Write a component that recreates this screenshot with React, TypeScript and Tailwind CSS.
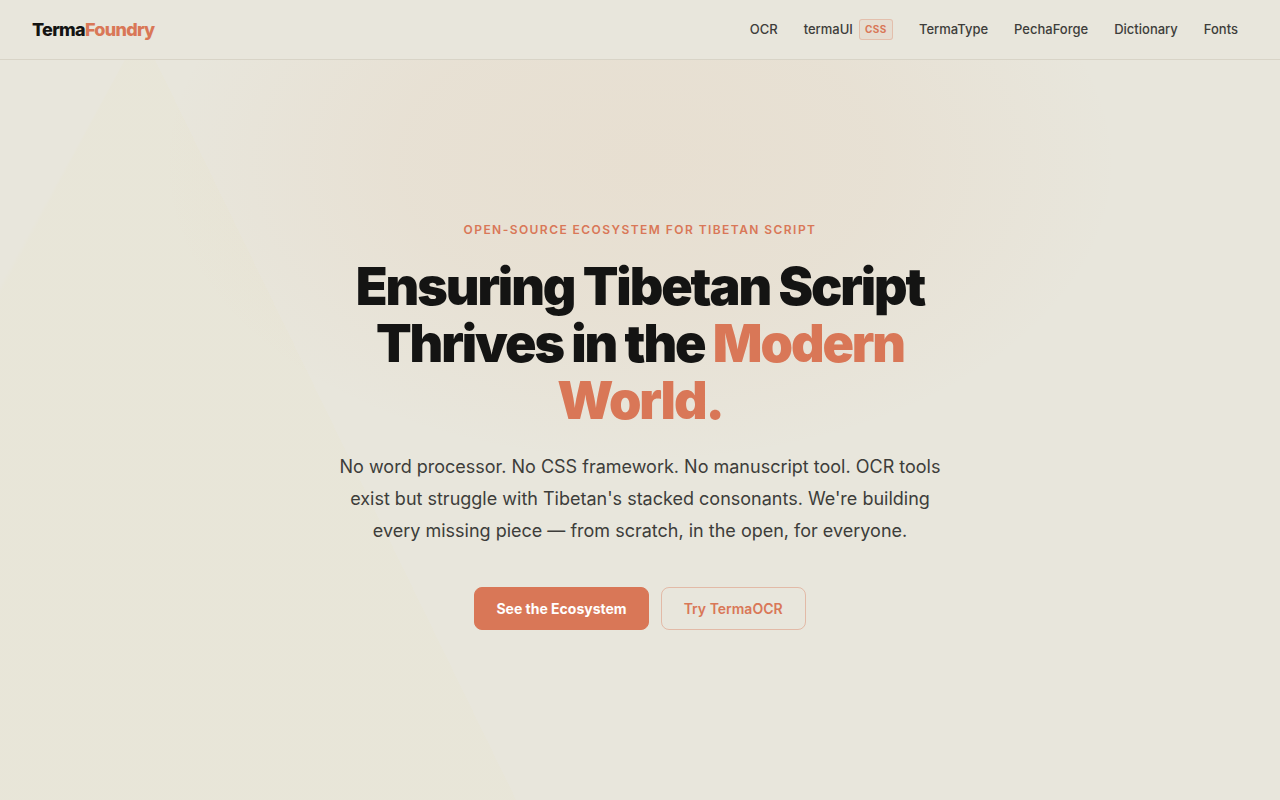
interface NavItem {
  label: string;
  href: string;
  tag?: string;
}

const navItems: NavItem[] = [
  { label: 'OCR', href: '#ocr' },
  { label: 'termaUI', href: '#termaui', tag: 'CSS' },
  { label: 'TermaType', href: '#termatype' },
  { label: 'PechaForge', href: '#pechaforge' },
  { label: 'Dictionary', href: '#dictionary' },
  { label: 'Fonts', href: '#fonts' },
];

function Navbar() {
  return (
    <header className="flex h-15 items-center justify-between border-b border-[#d8d4c7] bg-[#e8e6dc] px-8">
      <a href="#" className="text-lg leading-6 font-extrabold tracking-[-0.04em] text-[#141413]">
        Terma<span className="text-[#d97757]">Foundry</span>
      </a>
      <nav className="flex items-center gap-1.5">
        {navItems.map((item) => (
          <a
            key={item.label}
            href={item.href}
            className="flex items-center gap-1.5 px-2.5 text-[13px] font-medium text-[#3d3d3a]"
          >
            {item.label}
            {item.tag && (
              <span className="rounded-[3px] border border-[#d97757]/30 bg-[#d97757]/8 px-[5px] py-0.5 text-[10px] font-bold tracking-wider text-[#d97757]">
                {item.tag}
              </span>
            )}
          </a>
        ))}
      </nav>
    </header>
  );
}

function Hero() {
  return (
    <main className="flex flex-1 flex-col items-center justify-center bg-[radial-gradient(ellipse_480px_300px_at_50%_14%,rgba(224,140,80,0.08),rgba(224,140,80,0.06)_50%,transparent),conic-gradient(from_154deg_at_11%_-4%,rgba(232,228,200,0.18)_54deg,transparent_55deg)] px-8 pb-2 text-center">
      <p className="mb-5 text-xs font-semibold uppercase tracking-[0.12em] text-[#d97757]">
        Open-source ecosystem for Tibetan script
      </p>
      <h1 className="mb-[22px] max-w-[640px] text-[52px] leading-[57px] font-black tracking-[-0.04em] text-[#141413]">
        Ensuring Tibetan Script Thrives in the <span className="text-[#d97757]">Modern World.</span>
      </h1>
      <p className="mb-10 max-w-[620px] text-lg leading-8 text-[#3d3d3a]">
        No word processor. No CSS framework. No manuscript tool. OCR tools exist but struggle with
        Tibetan's stacked consonants. We're building every missing piece — from scratch, in the
        open, for everyone.
      </p>
      <div className="flex gap-3">
        <button className="rounded-lg border border-[#d97757] bg-[#d97757] px-[21px] py-3 text-sm leading-[17px] font-bold text-white">
          See the Ecosystem
        </button>
        <button className="rounded-lg border border-[#d97757]/40 px-[22px] py-3 text-sm leading-[17px] font-semibold text-[#d97757]">
          Try TermaOCR
        </button>
      </div>
    </main>
  );
}

export default function App() {
  return (
    <div className="flex min-h-screen flex-col bg-[#e8e6dc] font-['Inter',sans-serif]">
      <Navbar />
      <Hero />
    </div>
  );
}
